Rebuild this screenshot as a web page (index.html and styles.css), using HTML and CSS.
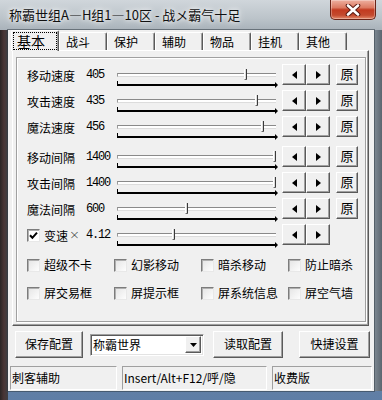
FILE: index.html
```html
<!DOCTYPE html>
<html lang="zh-CN">
<head>
<meta charset="utf-8">
<title>称霸世组</title>
<link rel="stylesheet" href="styles.css">
</head>
<body>
<div class="window">
  <div class="titlebar">
    <span class="title">称霸世组A—H组1—10区 - 战メ霸气十足</span>
    <div class="close">
      <svg width="16" height="12" viewBox="0 0 16 12"><path d="M3 1.5 L13 10.5 M13 1.5 L3 10.5" stroke="#5a1a12" stroke-width="4.6" stroke-linecap="round"/><path d="M3 1.5 L13 10.5 M13 1.5 L3 10.5" stroke="#fff" stroke-width="2.6" stroke-linecap="round"/></svg>
    </div>
  </div>
  <div class="client">
    <div class="tabs">
      <div class="tab active"><span class="focus">基本</span></div>
      <div class="tab">战斗</div>
      <div class="tab">保护</div>
      <div class="tab">辅助</div>
      <div class="tab">物品</div>
      <div class="tab">挂机</div>
      <div class="tab">其他</div>
    </div>
    <div class="panel">
      <div class="group">
        <div class="rows">
          <div class="row">
            <span class="label">移动速度</span><span class="val">405</span>
            <div class="slider"><div class="track"></div><div class="ticks"></div><div class="thumb" style="left:80.5%"></div></div>
            <div class="arrows"><div class="b3d abtn"><svg width="5" height="8" viewBox="0 0 5 8"><path d="M5 0 L0 4 L5 8Z"/></svg></div><div class="b3d abtn"><svg width="5" height="8" viewBox="0 0 5 8"><path d="M0 0 L5 4 L0 8Z"/></svg></div></div>
            <div class="b3d orig">原</div>
          </div>
          <div class="row">
            <span class="label">攻击速度</span><span class="val">435</span>
            <div class="slider"><div class="track"></div><div class="ticks"></div><div class="thumb" style="left:87.2%"></div></div>
            <div class="arrows"><div class="b3d abtn"><svg width="5" height="8" viewBox="0 0 5 8"><path d="M5 0 L0 4 L5 8Z"/></svg></div><div class="b3d abtn"><svg width="5" height="8" viewBox="0 0 5 8"><path d="M0 0 L5 4 L0 8Z"/></svg></div></div>
            <div class="b3d orig">原</div>
          </div>
          <div class="row">
            <span class="label">魔法速度</span><span class="val">456</span>
            <div class="slider"><div class="track"></div><div class="ticks"></div><div class="thumb" style="left:91%"></div></div>
            <div class="arrows"><div class="b3d abtn"><svg width="5" height="8" viewBox="0 0 5 8"><path d="M5 0 L0 4 L5 8Z"/></svg></div><div class="b3d abtn"><svg width="5" height="8" viewBox="0 0 5 8"><path d="M0 0 L5 4 L0 8Z"/></svg></div></div>
            <div class="b3d orig">原</div>
          </div>
          <div class="row gap-top">
            <span class="label">移动间隔</span><span class="val">1400</span>
            <div class="slider"><div class="track"></div><div class="ticks"></div><div class="thumb" style="left:98.6%"></div></div>
            <div class="arrows"><div class="b3d abtn"><svg width="5" height="8" viewBox="0 0 5 8"><path d="M5 0 L0 4 L5 8Z"/></svg></div><div class="b3d abtn"><svg width="5" height="8" viewBox="0 0 5 8"><path d="M0 0 L5 4 L0 8Z"/></svg></div></div>
            <div class="b3d orig">原</div>
          </div>
          <div class="row">
            <span class="label">攻击间隔</span><span class="val">1400</span>
            <div class="slider"><div class="track"></div><div class="ticks"></div><div class="thumb" style="left:98.6%"></div></div>
            <div class="arrows"><div class="b3d abtn"><svg width="5" height="8" viewBox="0 0 5 8"><path d="M5 0 L0 4 L5 8Z"/></svg></div><div class="b3d abtn"><svg width="5" height="8" viewBox="0 0 5 8"><path d="M0 0 L5 4 L0 8Z"/></svg></div></div>
            <div class="b3d orig">原</div>
          </div>
          <div class="row">
            <span class="label">魔法间隔</span><span class="val">600</span>
            <div class="slider"><div class="track"></div><div class="ticks"></div><div class="thumb" style="left:43.4%"></div></div>
            <div class="arrows"><div class="b3d abtn"><svg width="5" height="8" viewBox="0 0 5 8"><path d="M5 0 L0 4 L5 8Z"/></svg></div><div class="b3d abtn"><svg width="5" height="8" viewBox="0 0 5 8"><path d="M0 0 L5 4 L0 8Z"/></svg></div></div>
            <div class="b3d orig">原</div>
          </div>
          <div class="row">
            <span class="label speed">
              <span class="cb checked"><svg width="9" height="9" viewBox="0 0 9 9"><path d="M1 4.2 L3.4 6.8 L8 1.6" fill="none" stroke="#000" stroke-width="2"/></svg></span>
              <span class="speed-text">变速</span><span class="times">×</span>
            </span><span class="val">4.12</span>
            <div class="slider"><div class="track"></div><div class="ticks"></div><div class="thumb" style="left:35%"></div></div>
            <div class="arrows"><div class="b3d abtn"><svg width="5" height="8" viewBox="0 0 5 8"><path d="M5 0 L0 4 L5 8Z"/></svg></div><div class="b3d abtn"><svg width="5" height="8" viewBox="0 0 5 8"><path d="M0 0 L5 4 L0 8Z"/></svg></div></div>
          </div>
        </div>
        <div class="checks">
          <label class="ck"><span class="cb"></span>超级不卡</label>
          <label class="ck"><span class="cb"></span>幻影移动</label>
          <label class="ck"><span class="cb"></span>暗杀移动</label>
          <label class="ck"><span class="cb"></span>防止暗杀</label>
          <label class="ck"><span class="cb"></span>屏交易框</label>
          <label class="ck"><span class="cb"></span>屏提示框</label>
          <label class="ck"><span class="cb"></span>屏系统信息</label>
          <label class="ck"><span class="cb"></span>屏空气墙</label>
        </div>
      </div>
    </div>
    <div class="actions">
      <div class="b3d pbtn save">保存配置</div>
      <div class="combo"><span class="combo-text">称霸世界</span><span class="b3d drop"><svg width="7" height="4" viewBox="0 0 7 4"><path d="M0 0 H7 L3.5 4Z"/></svg></span></div>
      <div class="b3d pbtn load">读取配置</div>
      <div class="b3d pbtn quick">快捷设置</div>
    </div>
    <div class="status">
      <div class="sp sp1">刺客辅助</div>
      <div class="sp sp2">Insert/Alt+F12/呼/隐</div>
      <div class="sp sp3">收费版</div>
    </div>
  </div>
</div>
</body>
</html>
```
FILE: styles.css
```css
* { box-sizing: border-box; }
html, body { margin: 0; padding: 0; }
body {
  width: 382px;
  height: 400px;
  overflow: hidden;
  font-family: "Noto Sans CJK SC", "Noto Sans", sans-serif;
  font-size: 12px;
  color: #000;
}
.window {
  width: 382px;
  height: 400px;
  display: flex;
  flex-direction: column;
  background:
    linear-gradient(to right, #2a2525 0, #4a3636 4px, #3d3f44 8px) 0 30px / 8px 370px no-repeat,
    linear-gradient(to right, #7e8993, #5c6670) 374px 30px / 8px 361px no-repeat,
    linear-gradient(to bottom, #d0d6db 0, #bcc4ca 18px, #a9b2ba 30px, #7f8a95 60%, #5f7ea6 100%);
}
.titlebar {
  height: 30px;
  display: flex;
  justify-content: space-between;
  align-items: flex-start;
  padding-left: 9px;
}
.title {
  margin-top: 7px;
  line-height: 16px;
  font-size: 13px;
  color: #111;
  text-shadow: 0 0 4px #fff, 0 0 8px rgba(255,255,255,.8);
}
.close {
  width: 46px;
  height: 20px;
  margin-right: 6px;
  border: 1px solid #6a2418;
  border-top: none;
  border-radius: 0 0 5px 5px;
  background: linear-gradient(#eeb0a0 0, #dc7a62 40%, #c23a20 52%, #c44a2e 80%, #e48a6c 100%);
  box-shadow: inset 0 0 0 1px rgba(255,255,255,.3);
  display: flex;
  align-items: center;
  justify-content: center;
}
.client {
  margin: 0 8px;
  height: 361px;
  background: #f0f0f0;
  display: flex;
  flex-direction: column;
  box-shadow: 0 0 0 1px rgba(50,60,70,.55);
}
.tabs {
  height: 20px;
  display: flex;
  align-items: flex-end;
  padding-left: 3px;
  position: relative;
  z-index: 1;
}
.tab {
  width: 48px;
  height: 18px;
  padding-left: 6px;
  line-height: 17px;
  font-size: 12px;
  border-top: 1px solid #fff;
  border-left: 1px solid #fff;
  border-right: 1px solid #5a5a5a;
  box-shadow: inset -1px 0 #a0a0a0;
  border-radius: 2px 2px 0 0;
}
.tab.active {
  height: 21px;
  margin-bottom: -1px;
  padding: 1px 1px 0 1px;
  background: #f0f0f0;
}
.focus {
  display: block;
  width: 44px;
  height: 18px;
  border: 1px dotted #000;
  padding-left: 3px;
  font-size: 14px;
  line-height: 16px;
}
.panel {
  width: 357px;
  height: 276px;
  margin-left: 4px;
  border: 1px solid;
  border-color: #fff #5a5a5a #5a5a5a #fff;
  box-shadow: inset -1px -1px #a0a0a0;
  padding: 6px 0 0 3px;
}
.group {
  width: 350px;
  height: 265px;
  border: 1px solid #a0a0a0;
  box-shadow: 1px 1px #fff, inset 1px 1px #fff;
  padding: 6px 0 0 10px;
}
.rows { display: flex; flex-direction: column; }
.row {
  display: flex;
  align-items: flex-start;
  height: 26px;
}
.row.gap-top { margin-top: 4px; }
.label {
  width: 59px;
  padding-top: 3px;
  line-height: 17px;
  white-space: nowrap;
}
.val {
  width: 31px;
  padding-top: 3px;
  line-height: 17px;
  font-family: "Liberation Mono", "DejaVu Sans Mono", monospace;
  font-size: 12px;
  letter-spacing: -1.2px;
}
.slider {
  width: 159px;
  height: 26px;
  position: relative;
  display: flex;
  flex-direction: column;
}
.track {
  margin-top: 9px;
  height: 4px;
  background: #fff;
  border-top: 1px solid #8a8a8a;
  border-bottom: 1px solid #dcdcdc;
  border-left: 1px solid #9a9a9a;
}
.ticks {
  margin-top: 7px;
  height: 2px;
  background: #000;
  position: relative;
}
.ticks::after {
  content: "";
  position: absolute;
  right: -2px;
  top: -2px;
  border-left: 3px solid #000;
  border-top: 3px solid transparent;
  border-bottom: 3px solid transparent;
}
.ticks::before {
  content: "";
  position: absolute;
  left: 0;
  top: -3px;
  width: 1px;
  height: 3px;
  background: #000;
}
.thumb {
  position: absolute;
  top: 5px;
  width: 3px;
  height: 11px;
  margin-left: -1px;
  background: #dcdcdc;
  border-left: 1px solid #fff;
  border-right: 1px solid #3a3a3a;
  border-bottom: 1px solid #6a6a6a;
  border-radius: 0 0 1px 1px;
}
.b3d {
  background: #f0f0f0;
  border: 1px solid;
  border-color: #fff #5a5a5a #5a5a5a #fff;
  box-shadow: inset -1px -1px #a0a0a0;
}
.arrows {
  display: flex;
  margin-left: 6px;
}
.abtn {
  width: 24px;
  height: 21px;
  display: flex;
  align-items: center;
  justify-content: center;
}
.abtn svg { fill: #000; }
.orig {
  width: 22px;
  height: 21px;
  margin-left: 6px;
  font-size: 13px;
  line-height: 18px;
  text-align: center;
}
.speed {
  display: flex;
  align-items: flex-start;
  padding-top: 0;
}
.speed .cb { margin-top: 5px; }
.speed-text {
  margin-left: 4px;
  padding-top: 3px;
  line-height: 17px;
}
.times {
  margin-left: 1px;
  padding-top: 2px;
  line-height: 17px;
  font-size: 13px;
  color: #333;
  font-family: "DejaVu Sans", sans-serif;
  font-weight: 300;
}
.cb {
  width: 13px;
  height: 13px;
  flex: none;
  background: linear-gradient(135deg, #e4e4e4, #fdfdfd);
  border: 1px solid;
  border-color: #7c7c7c #e8e8e8 #e8e8e8 #7c7c7c;
  box-shadow: inset 1px 1px #b0b0b0;
  display: flex;
  align-items: center;
  justify-content: center;
}
.cb.checked { background: #fff; }
.checks {
  margin-top: 1px;
  display: grid;
  grid-template-columns: repeat(4, 87px);
  grid-auto-rows: 28px;
}
.ck {
  display: flex;
  align-items: center;
  gap: 4px;
  line-height: 16px;
  white-space: nowrap;
}
.actions {
  display: flex;
  align-items: center;
  height: 27px;
  margin-top: 5px;
  padding-left: 7px;
}
.pbtn {
  height: 27px;
  line-height: 24px;
  text-align: center;
  font-size: 12px;
}
.save { width: 68px; }
.load { width: 70px; margin-left: 9px; }
.quick { width: 71px; margin-left: 16px; }
.combo {
  width: 114px;
  height: 22px;
  margin-left: 7px;
  background: #fff;
  border: 1px solid;
  border-color: #a0a0a0 #fff #fff #a0a0a0;
  box-shadow: inset 1px 1px #5a5a5a, inset -1px -1px #e3e3e3;
  display: flex;
  align-items: center;
  justify-content: space-between;
  padding: 2px 2px 2px 2px;
}
.combo-text { line-height: 16px; }
.drop {
  width: 16px;
  height: 17px;
  display: flex;
  align-items: center;
  justify-content: center;
}
.drop svg { fill: #000; }
.status {
  display: flex;
  height: 24px;
  margin-top: 8px;
  padding-left: 2px;
  gap: 5px;
}
.sp {
  height: 24px;
  border: 1px solid;
  border-color: #a0a0a0 #fff #fff #a0a0a0;
  line-height: 22px;
  padding-left: 1px;
  white-space: nowrap;
}
.sp1 { width: 107px; }
.sp2 { width: 145px; }
.sp3 { width: 100px; }
```
